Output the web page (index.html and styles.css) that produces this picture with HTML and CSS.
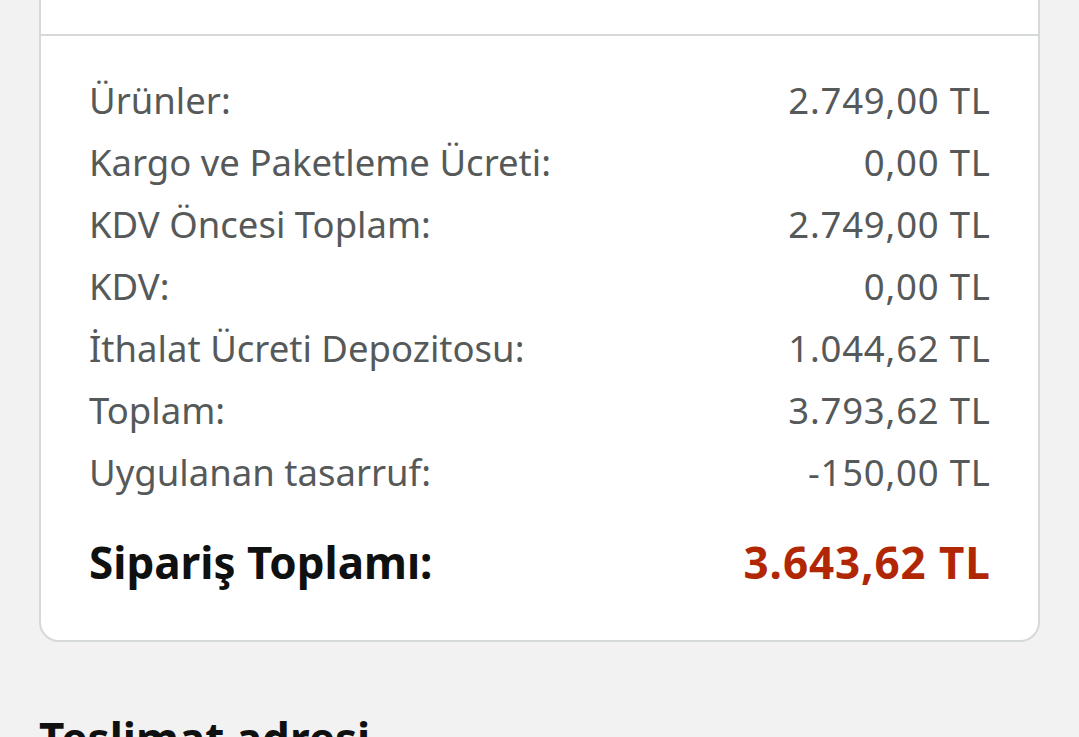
FILE: index.html
```html
<!DOCTYPE html>
<html lang="tr">
<head>
<meta charset="utf-8">
<link rel="stylesheet" href="styles.css">
</head>
<body>
<div class="page">
  <div class="card">
    <div class="card-top"></div>
    <div class="summary">
      <div class="row"><span>Ürünler:</span><span class="val">2.749,00 TL</span></div>
      <div class="row"><span>Kargo ve Paketleme Ücreti:</span><span class="val">0,00 TL</span></div>
      <div class="row"><span>KDV Öncesi Toplam:</span><span class="val">2.749,00 TL</span></div>
      <div class="row"><span>KDV:</span><span class="val">0,00 TL</span></div>
      <div class="row"><span>İthalat Ücreti Depozitosu:</span><span class="val">1.044,62 TL</span></div>
      <div class="row"><span>Toplam:</span><span class="val">3.793,62 TL</span></div>
      <div class="row"><span>Uygulanan tasarruf:</span><span class="val">-150,00 TL</span></div>
      <div class="row total"><span>Sipariş Toplamı:</span><span class="val price">3.643,62 TL</span></div>
    </div>
  </div>
  <h2 class="section-title">Teslimat adresi</h2>
</div>
</body>
</html>
```

FILE: styles.css
```css
html, body {
  margin: 0;
  padding: 0;
  background: #f2f2f2;
}
body {
  font-family: "Noto Sans", "Open Sans", sans-serif;
  color: #0f1111;
  overflow: hidden;
  height: 737px;
}
.page {
  padding: 0 39px;
}
.card {
  background: #fff;
  border: 2px solid #d5d9d9;
  border-top: none;
  border-radius: 0 0 20px 20px;
}
.card-top {
  height: 34px;
  border-bottom: 2px solid #d5d9d9;
}
.summary {
  padding: 33px 48px 47px 48px;
}
.row {
  display: flex;
  justify-content: space-between;
  font-size: 36.5px;
  line-height: 62px;
  color: #565959;
}
.val {
  letter-spacing: 0.8px;
  margin-right: -0.8px;
}
.row.total {
  margin-top: 28px;
  font-size: 44px;
  font-weight: 700;
  color: #0f1111;
}
.price {
  color: #b12704;
  letter-spacing: 0.9px;
}
.section-title {
  margin: 66px 0 0 0;
  font-size: 44px;
  line-height: 60px;
  font-weight: 700;
  color: #0f1111;
}
```
